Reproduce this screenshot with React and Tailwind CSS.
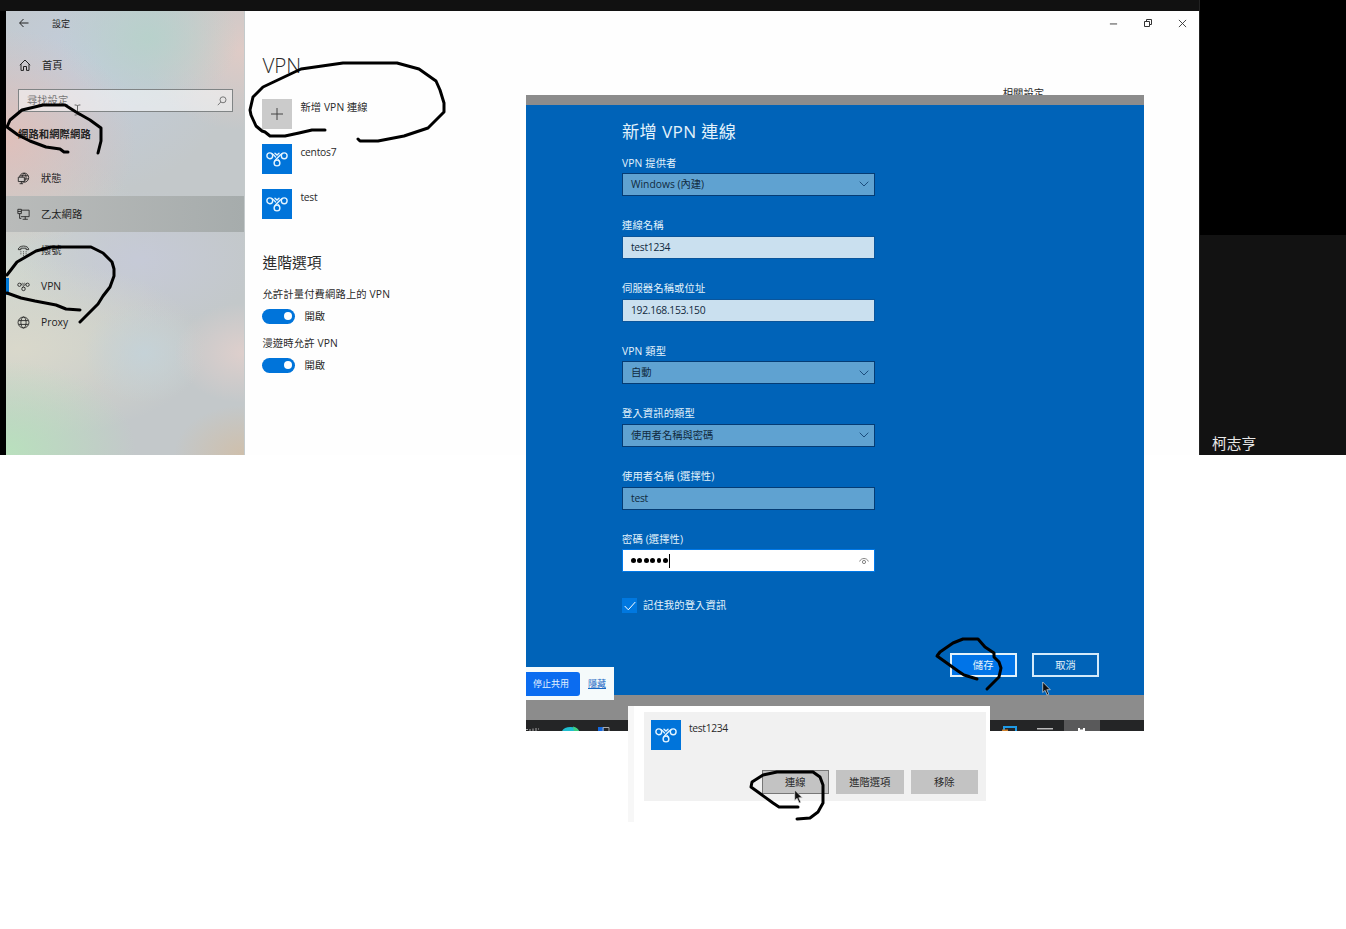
import React from "react";

const VpnGlyph = ({ className }) => (
  <svg viewBox="0 0 30 30" className={className} fill="none" stroke="currentColor" strokeWidth="1.4" strokeLinecap="round">
    <circle cx="7.800" cy="11.800" r="2.900" />
    <circle cx="22.200" cy="11.800" r="2.900" />
    <circle cx="15" cy="19" r="2.900" />
    <path d="M20.200 9.600C17.800 10.600 16.500 12.800 12.900 16.800M9.800 9.600c1.500.5 2.600 1.900 3.700 3.300M16.200 15.800l1 1.200M13 9.300l2 1.800 2-1.800" />
  </svg>
);

const icons = {
  status: (
    <>
      <circle cx="8.200" cy="6.500" r="5.300" />
      <path d="M8.200 1.200c-3 3-3 7 0 10M8.200 1.200c3 3 3 7 0 10M3.700 4.300h9M3 8h10.200" />
      <path d="M1.500 6h7v5h-7zM5 11v2.500M3 13.500h4" fill="#cfc9c8" />
    </>
  ),
  ethernet: (
    <>
      <path d="M1 1.500h4v5H1zM1 4h4M5 2.500h9v7.500H4.500M9.500 10v3M6.500 13h6M3 6.500v5.500h2" />
    </>
  ),
  dial: (
    <>
      <path d="M1.500 6.500c0-5.500 12-5.500 12 0h-3V4.800h-6v1.700z" />
      <path d="M4 9h1M7 9h1M10 9h1M4 11.300h1M7 11.300h1M10 11.300h1M7 13.500h1" />
    </>
  ),
  vpn: (
    <>
      <circle cx="2.800" cy="5.500" r="1.900" />
      <circle cx="12.200" cy="5.500" r="1.900" />
      <circle cx="7.500" cy="10.300" r="2" />
      <path d="M11 4C9.300 4.600 8.300 6.500 6 9M4 4c1.200.4 2 1.500 2.700 2.300M8.400 8l.6.800M6.200 3.600l1.300 1.100 1.300-1.100" />
    </>
  ),
  proxy: (
    <>
      <circle cx="7.500" cy="7.500" r="6.300" />
      <ellipse cx="7.500" cy="7.500" rx="3" ry="6.300" />
      <path d="M2 5.300h11M2 9.700h11" />
    </>
  ),
};

const nav = [
  ["status", "狀態"],
  ["ethernet", "乙太網路"],
  ["dial", "撥號"],
  ["vpn", "VPN"],
  ["proxy", "Proxy"],
];

function Sidebar() {
  return (
    <aside className="flex h-[444px] w-[239px] shrink-0 flex-col border-r border-[#c4cacb] bg-[#c3c8ca] bg-[radial-gradient(ellipse_130px_110px_at_0%_29%,#dfc0bb_0%,transparent_100%),radial-gradient(ellipse_90px_70px_at_60%_6%,#b8d1cb_0%,transparent_100%),radial-gradient(ellipse_100px_80px_at_100%_9%,#dfcbc6_0%,transparent_100%),radial-gradient(ellipse_130px_90px_at_0%_99%,#b9e0bd_0%,transparent_100%),radial-gradient(ellipse_70px_50px_at_100%_77%,#decfcc_0%,transparent_100%),radial-gradient(ellipse_70px_50px_at_100%_100%,#cfbfab_0%,transparent_100%),radial-gradient(ellipse_60px_50px_at_58%_77%,#c5d2d7_0%,transparent_100%),radial-gradient(ellipse_190px_90px_at_5%_76%,#d9d8cb_0%,transparent_100%),radial-gradient(ellipse_120px_70px_at_56%_56%,#c6cad7_0%,transparent_100%),radial-gradient(ellipse_150px_130px_at_34%_12%,#c2cddb_0%,transparent_100%),radial-gradient(ellipse_160px_140px_at_0%_60%,#d0d7d0_0%,transparent_100%)] text-[#222]">
      <div className="flex h-6 items-center pl-[13px]">
        <svg viewBox="0 0 10 10" className="size-[10px]" fill="none" stroke="currentColor" strokeWidth="1">
          <path d="M9.500 5H.8M4.500 1L.6 5l3.900 4" />
        </svg>
        <span className="ml-[23px] text-[9px]">設定</span>
      </div>
      <div className="mt-3 flex h-9 items-center pl-[13px]">
        <svg viewBox="0 0 12 12" className="size-[12px]" fill="none" stroke="currentColor" strokeWidth="1">
          <path d="M.8 6.200L6 1l5.200 5.200M2 5.200v6.200h2.500V7.500h3v3.900H10V5.200" />
        </svg>
        <span className="ml-[11px]">首頁</span>
      </div>
      <div className="mt-[6px] ml-3 flex h-[23px] w-[215px] items-center justify-between border border-[#808485] bg-white/50 pr-[5px] pl-2 text-[#777]">
        <span>尋找設定</span>
        <svg viewBox="0 0 10 10" className="size-[10px]" fill="none" stroke="currentColor" strokeWidth="1">
          <circle cx="6" cy="3.800" r="3" />
          <path d="M3.800 6L.8 9.200" />
        </svg>
      </div>
      <div className="flex h-[45px] items-center pl-3 font-bold tracking-[.1px]">網路和網際網路</div>
      <nav className="mt-[3px] flex flex-col">
        {nav.map(([id, label]) => (
          <div
            key={id}
            className={
              id === "ethernet"
                ? "flex h-9 items-center bg-[linear-gradient(90deg,#b9bbba,#a6acac)]"
                : "flex h-9 items-center"
            }
          >
            <span className={id === "vpn" ? "h-[17px] w-[3px] bg-[#0078d7]" : "h-[17px] w-[3px]"} />
            <svg viewBox="0 0 15 15" className="ml-2 size-[13px]" fill="none" stroke="currentColor" strokeWidth="1">
              {icons[id]}
            </svg>
            <span className="ml-[11px] pt-px">{label}</span>
          </div>
        ))}
      </nav>
    </aside>
  );
}

const Tile = () => (
  <div className="size-[30px] shrink-0 bg-[#0074da] text-[#e4f4ff]">
    <VpnGlyph className="size-[30px]" />
  </div>
);

const Toggle = () => (
  <div className="flex h-[16px] items-center gap-[9px]">
    <div className="flex h-[15px] w-[33px] items-center justify-end rounded-full bg-[#0074da] pr-[3px]">
      <div className="size-[8px] rounded-full bg-white" />
    </div>
    <span>開啟</span>
  </div>
);

function Main() {
  return (
    <main className="flex h-[444px] grow flex-col bg-[#fefefe] pl-[17.400px] text-[#2a2a2a]">
      <div className="flex h-6 items-center justify-end gap-[25px] pr-3 text-[#333]">
        <svg viewBox="0 0 10 10" className="size-[9px]" fill="none" stroke="currentColor"><path d="M1 5.500h8" /></svg>
        <svg viewBox="0 0 10 10" className="size-[10px]" fill="none" stroke="currentColor"><path d="M1.500 3.500h5v5h-5zM3.500 3.500v-2h5v5h-2" /></svg>
        <svg viewBox="0 0 10 10" className="size-[9px]" fill="none" stroke="currentColor"><path d="M1 1l8 8M9 1l-8 8" /></svg>
      </div>
      <div className="flex h-[58px] items-center pt-[2px] text-[20.600px] font-light">VPN</div>
      <div className="-mt-[7px] flex h-[14px] items-center justify-end pr-[155px]">相關設定</div>
      <div className="-mt-px flex flex-col gap-[15px]">
        <div className="flex gap-2">
          <div className="flex size-[30px] items-center justify-center bg-[#cbcbcb]">
            <svg viewBox="0 0 12 12" className="size-[12px]" stroke="#444"><path d="M6 0v12M0 6h12" /></svg>
          </div>
          <span className="h-4 leading-4 tracking-[.08px]">新增 VPN 連線</span>
        </div>
        <div className="flex gap-2"><Tile /><span className="h-4 leading-4 tracking-[-.25px]">centos7</span></div>
        <div className="flex gap-2"><Tile /><span className="h-4 leading-4 tracking-[-.25px]">test</span></div>
      </div>
      <div className="mt-[31px] flex h-6 items-center text-[14.800px]">進階選項</div>
      <div className="mt-3 flex h-4 items-center tracking-[.14px]">允許計量付費網路上的 VPN</div>
      <div className="mt-[6px]"><Toggle /></div>
      <div className="mt-[11px] flex h-4 items-center tracking-[.14px]">漫遊時允許 VPN</div>
      <div className="mt-[6px]"><Toggle /></div>
    </main>
  );
}

const Chevron = () => (
  <svg viewBox="0 0 10 6" className="h-[6px] w-[10px]" fill="none" stroke="#1d4d7d" strokeWidth="1">
    <path d="M.7.700L5 5l4.300-4.300" />
  </svg>
);

const fields = [
  { label: "VPN 提供者", value: "Windows (內建)", kind: "select" },
  { label: "連線名稱", value: "test1234", kind: "input" },
  { label: "伺服器名稱或位址", value: "192.168.153.150", kind: "input" },
  { label: "VPN 類型", value: "自動", kind: "select" },
  { label: "登入資訊的類型", value: "使用者名稱與密碼", kind: "select" },
  { label: "使用者名稱 (選擇性)", value: "test", kind: "dim" },
  { label: "密碼 (選擇性)", kind: "password" },
];

const boxStyle = {
  select: "border-[#053c74] bg-[#5fa2d1]",
  dim: "border-[#053c74] bg-[#5fa2d1] tracking-[-.25px]",
  input: "border-[#0a559b] bg-[#cae0ef] tracking-[-.3px]",
  password: "border-[#0078e8] bg-white",
};

function Field({ label, value, kind }) {
  return (
    <div className="flex h-[62.700px] flex-col">
      <div className="flex h-5 shrink-0 items-center pb-px tracking-[.12px] text-[#e2f2fb]">{label}</div>
      <div className={"flex h-[23px] w-[253px] shrink-0 items-center justify-between border pr-[5px] pb-[.500px] pl-2 text-[#102a40] " + boxStyle[kind]}>
        {kind === "password" ? (
          <>
            <div className="flex items-center gap-[1.600px]">
              {[0, 1, 2, 3, 4, 5].map((i) => (
                <i key={i} className="size-[4.800px] rounded-full bg-black" />
              ))}
              <i className="h-[14px] w-px bg-black" />
            </div>
            <svg viewBox="0 0 10 8" className="h-[8px] w-[10px]" fill="none" stroke="#777" strokeWidth=".9">
              <path d="M.6 4.500C2 .5 8 .5 9.400 4.500" />
              <circle cx="5" cy="5" r="1.600" />
            </svg>
          </>
        ) : (
          <span>{value}</span>
        )}
        {kind === "select" && <Chevron />}
      </div>
    </div>
  );
}

const Pointer = ({ className }) => (
  <svg viewBox="0 0 9 15" className={className} fill="#111" stroke="#ddd" strokeWidth=".7">
    <path d="M.7 1v10.500l2.400-2.200 2 4.700 1.700-.8-2-4.500h3.500z" />
  </svg>
);

function Dialog() {
  return (
    <section className="absolute top-[95px] left-[526px] flex h-[636px] w-[618px] flex-col overflow-hidden bg-[#8c8c8c] pt-[10px]">
      <div className="flex h-[590px] flex-col bg-[#0063b8] pl-24">
        <h2 className="mt-[13.500px] flex h-[26px] items-center text-[17.200px] tracking-[.35px] text-[#e2f2fb]">新增 VPN 連線</h2>
        <div className="mt-[8.700px] flex flex-col">
          {fields.map((f) => <Field key={f.label} {...f} />)}
        </div>
        <div className="mt-[6px] flex h-[15px] items-center gap-[6px] text-[#e2f2fb]">
          <div className="flex size-[15px] items-center justify-center bg-[#0078e0]">
            <svg viewBox="0 0 12 10" className="h-[10px] w-[12px]" fill="none" stroke="white"><path d="M.7 5l3.600 3.800L11.300 1" /></svg>
          </div>
          <span className="tracking-[.12px]">記住我的登入資訊</span>
        </div>
        <div className="mt-[40px] flex gap-[15px] pl-[327.500px] text-[#e2f2fb]">
          <div className="flex h-6 w-[67.300px] items-center justify-center border-2 border-[#e2f2fb] bg-[#0074e8]">儲存</div>
          <div className="flex h-6 w-[67.300px] items-center justify-center border-2 border-[#d3eafa]">取消</div>
        </div>
      </div>
      <div className="mt-[25px] flex h-[11px] justify-between bg-[#242526]">
        <div className="flex items-end">
          <svg viewBox="0 0 90 11" className="h-[11px] w-[90px]">
            <path d="M0 9.500h2M4 9v2M7 8.500v2.500M10 8v3M12 9h1" stroke="#aaa" fill="none" />
            <path d="M36 11a9 6 0 0 1 17 0z" fill="#20bfd0" />
            <path d="M47 6.500a9 6 0 0 1 6 4.500h-5z" fill="#3fcf80" />
            <path d="M72 11V7h6v4z" fill="#1469df" />
            <path d="M77 11V7.500h6V11" stroke="#aaa" fill="none" />
          </svg>
        </div>
        <svg viewBox="0 0 154 11" className="h-[11px] w-[154px]">
          <path d="M74 0h36v11H74z" fill="#59595a" />
          <path d="M14 11V7h12v4" stroke="#1f9be6" strokeWidth="2" fill="none" />
          <path d="M12 9.500h6V11h-6z" fill="#cf812d" />
          <path d="M47 8h16v1.500H47z" fill="#bbb" />
          <path d="M89 11V8M94 11V8M88 10.500h7" stroke="white" strokeWidth="2" />
        </svg>
      </div>
      <div className="absolute top-[572px] left-0 flex h-[33px] w-[88px] items-center bg-[#f5fafb] text-[9px]">
        <div className="flex h-6 w-[54px] items-center justify-center rounded-r-[3px] bg-[#0b6cf0] pr-1 text-[#e5f2ff]">停止共用</div>
        <span className="ml-2 text-[#1767c4] underline underline-offset-1">隱藏</span>
      </div>
    </section>
  );
}

function ConnectionCard() {
  return (
    <section className="absolute top-[706px] left-[628px] flex h-[116px] w-[362px] border-l-[6px] border-[#f7f7f7] bg-white pt-[6px] pl-[10px] text-[#2a2a2a]">
      <div className="flex h-[89px] w-[342px] flex-col bg-[#f1f1f1] pt-2 pr-2 pl-[7px]">
        <div className="flex gap-2"><Tile /><span className="h-4 leading-4 tracking-[-.35px]">test1234</span></div>
        <div className="mt-5 flex justify-end gap-[7px]">
          <div className="flex h-6 w-[67.500px] items-center justify-center border border-[#777] bg-[#c3c3c3]">連線</div>
          <div className="flex h-6 w-[67.500px] items-center justify-center bg-[#c3c3c3]">進階選項</div>
          <div className="flex h-6 w-[67.500px] items-center justify-center bg-[#c3c3c3]">移除</div>
        </div>
      </div>
    </section>
  );
}

const strokes = [
  "98,153 101,141 101,128 90,120 76,112 65,105 43,105 22,110 10,120 7,127 18,135 30,141 46,147 60,149 64,152 68,152",
  "80,322 88,314 98,304 103,296 110,287 114,276 114,269 112,262 103,253 91,247 51,247 36,251 17,262 7,275",
  "7,293 21,298 35,301 56,305 66,309 80,310",
  "325,130 312,130 299,133 285,136 270,136 265,132 262,131 256,126 251,115 250,110 253,97 263,87 301,69 343,63 397,63 419,69 436,81 440,90 444,103 444,112 428,128 404,136 378,141 360,141 358,139",
  "977,679 964,675 958,671 937,656 940,652 953,643 963,639 978,639 985,647 994,653 994,657 999,662 1001,668 999,677 987,689",
  "798,807 779,807 773,803 751,787 752,782 763,775 777,772 813,772 820,777 823,785 823,803 818,812 810,818 797,819",
];

export default function App() {
  return (
    <div className="relative h-[929px] w-[1346px] overflow-hidden bg-white font-['Open_Sans','Noto_Sans_CJK_TC',sans-serif] text-[10.300px] leading-none whitespace-nowrap">
      <div className="flex h-[455px]">
        <div className="flex w-[1199px] flex-col bg-black">
          <div className="h-[11px] bg-[#111]" />
          <div className="flex pl-[6px]">
            <Sidebar />
            <Main />
          </div>
        </div>
        <div className="flex grow flex-col border-l border-[#222] bg-black">
          <div className="h-[235px]" />
          <div className="flex h-[220px] items-end bg-[#121212] pb-[4px] pl-3 text-[14.700px] text-[#e8e8e8]">柯志亨</div>
        </div>
      </div>
      <Dialog />
      <ConnectionCard />
      <svg viewBox="0 0 1346 929" className="pointer-events-none absolute inset-0 h-[929px] w-[1346px]" fill="none" stroke="black" strokeWidth="3" strokeLinecap="round" strokeLinejoin="round">
        <path d="M75 105h1.500l1 1 1-1H80M77.500 106v8M75 115h1.500l1-1 1 1H80" stroke="#666" strokeWidth="1" />
        {strokes.map((p) => <polyline key={p} points={p} />)}
      </svg>
      <Pointer className="absolute top-[681px] left-[1042px] h-[15px] w-[9px]" />
      <Pointer className="absolute top-[789px] left-[794px] h-[15px] w-[9px]" />
    </div>
  );
}
